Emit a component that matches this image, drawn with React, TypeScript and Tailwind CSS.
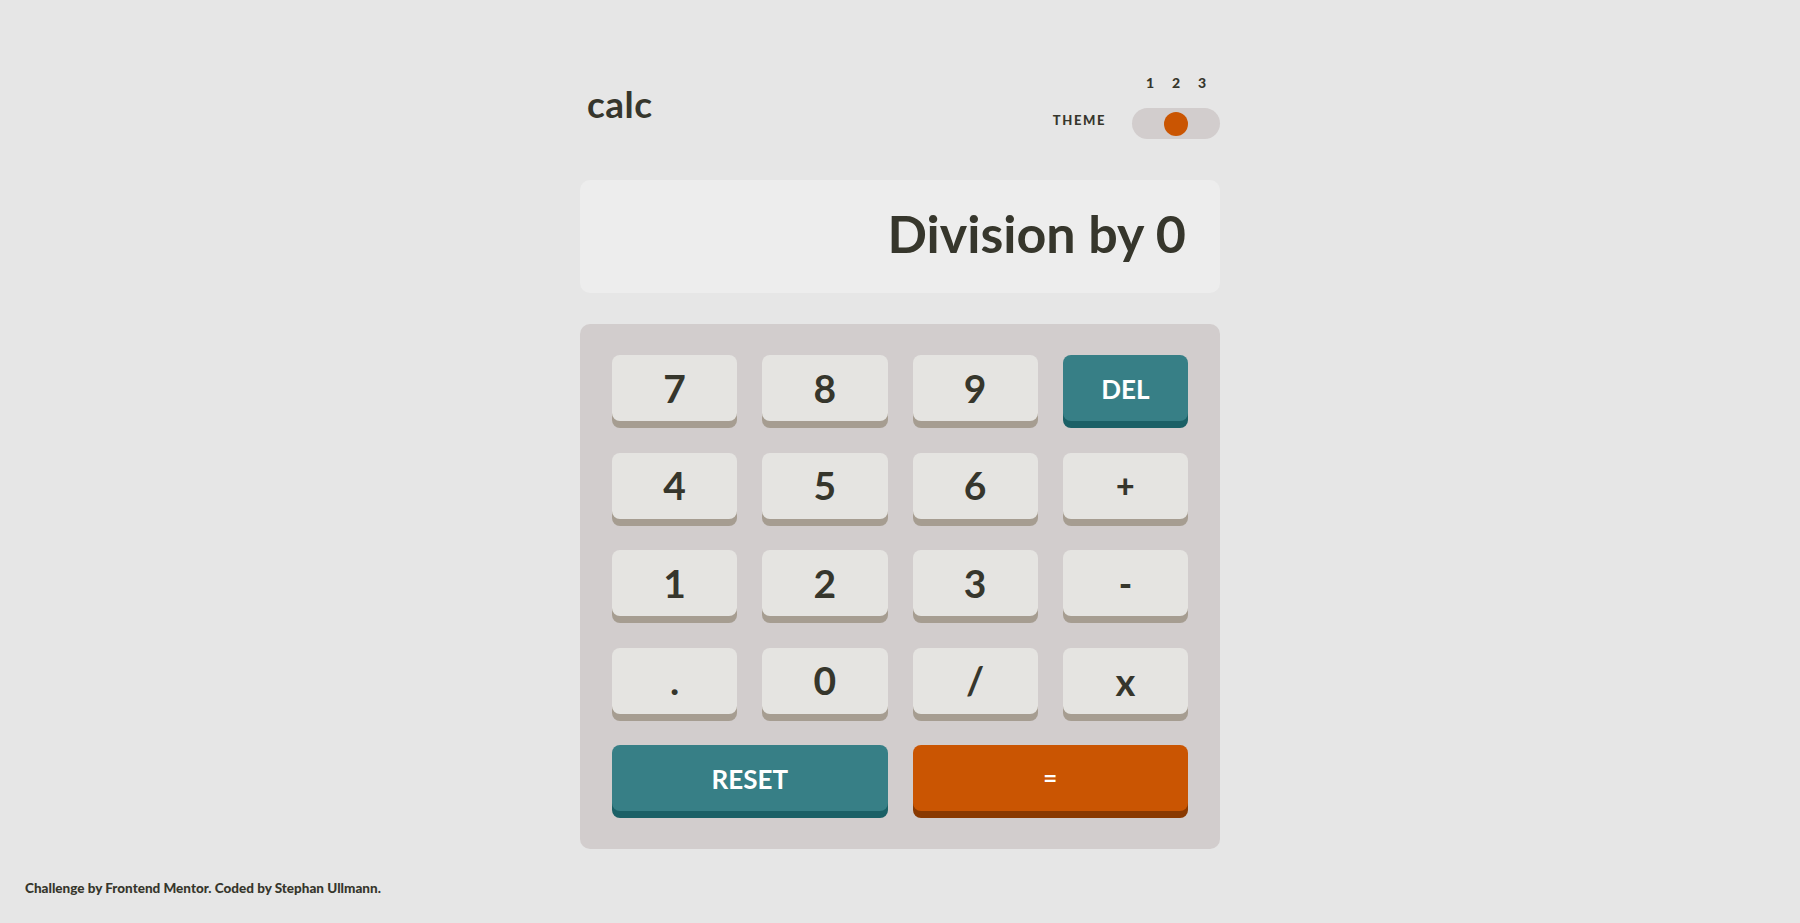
const keys: { label: string; kind: 'num' | 'del' | 'reset' | 'eq'; size?: string }[] = [
  { label: '7', kind: 'num' },
  { label: '8', kind: 'num' },
  { label: '9', kind: 'num' },
  { label: 'DEL', kind: 'del' },
  { label: '4', kind: 'num' },
  { label: '5', kind: 'num' },
  { label: '6', kind: 'num' },
  { label: '+', kind: 'num', size: 'text-[32px] font-black' },
  { label: '1', kind: 'num' },
  { label: '2', kind: 'num' },
  { label: '3', kind: 'num' },
  { label: '-', kind: 'num', size: 'text-[36px] font-black' },
  { label: '.', kind: 'num' },
  { label: '0', kind: 'num' },
  { label: '/', kind: 'num' },
  { label: 'x', kind: 'num', size: 'text-[38px] font-bold' },
  { label: 'RESET', kind: 'reset' },
  { label: '=', kind: 'eq' },
];

function Key({ label, kind, size }: { label: string; kind: string; size?: string }) {
  if (kind === 'del' || kind === 'reset') {
    return (
      <button
        className={`h-[66px] rounded-[8px] bg-[#377f86] text-white text-[26px] font-bold leading-none shadow-[0_7px_0_#1b6066] flex items-center justify-center pt-[2px] ${
          kind === 'reset' ? 'col-span-2' : ''
        }`}
      >
        {label}
      </button>
    );
  }
  if (kind === 'eq') {
    return (
      <button className="col-span-2 h-[66px] rounded-[8px] bg-[#ca5502] text-white text-[24px] font-bold leading-none shadow-[0_7px_0_#893901] flex items-center justify-center">
        {label}
      </button>
    );
  }
  return (
    <button
      className={`h-[66px] rounded-[8px] bg-[#e5e4e1] text-[#36362c] leading-none shadow-[0_7px_0_#a69d91] flex items-center justify-center ${
        size ?? 'text-[39px] font-bold'
      }`}
    >
      {label}
    </button>
  );
}

export default function App() {
  return (
    <div className="min-h-screen bg-[#e6e6e6] text-[#36362c] font-['Lato','Open_Sans',sans-serif] flex flex-col">
      <main className="w-[640px] mx-auto pt-[75px]">
        {/* Header */}
        <header className="flex items-start justify-between">
          <h1 className="mt-[11px] pl-[7px] text-[37px] leading-[36px] font-bold tracking-[0.5px]">calc</h1>
          <div className="flex items-end gap-[26px]">
            <span className="mb-[12px] text-[13px] leading-none font-black tracking-[1.6px]">THEME</span>
            <div className="w-[88px]">
              <div className="grid grid-cols-3 px-[5px] text-center text-[14px] leading-[16px] font-black mb-[17px]">
                <span>1</span>
                <span>2</span>
                <span>3</span>
              </div>
              <div className="h-[31px] rounded-full bg-[#d2cdcd] flex items-center justify-center">
                <span className="w-[24px] h-[24px] rounded-full bg-[#ca5502]" />
              </div>
            </div>
          </div>
        </header>

        {/* Screen */}
        <section className="mt-[41px] h-[113px] rounded-[10px] bg-[#ededed] flex items-center justify-end pr-[34px] pb-[8px]">
          <span className="text-[52px] leading-none font-bold">Division by 0</span>
        </section>

        {/* Keypad */}
        <section className="mt-[31px] rounded-[10px] bg-[#d2cdcd] px-[32px] pt-[31px] pb-[38px] grid grid-cols-4 gap-x-[25px] gap-y-[31.5px]">
          {keys.map((k) => (
            <Key key={k.label} label={k.label} kind={k.kind} size={k.size} />
          ))}
        </section>
      </main>

      <footer className="mt-[31px] px-[25px] text-[13.5px] leading-[16px] font-black">
        Challenge by Frontend Mentor. Coded by Stephan Ullmann.
      </footer>
    </div>
  );
}
